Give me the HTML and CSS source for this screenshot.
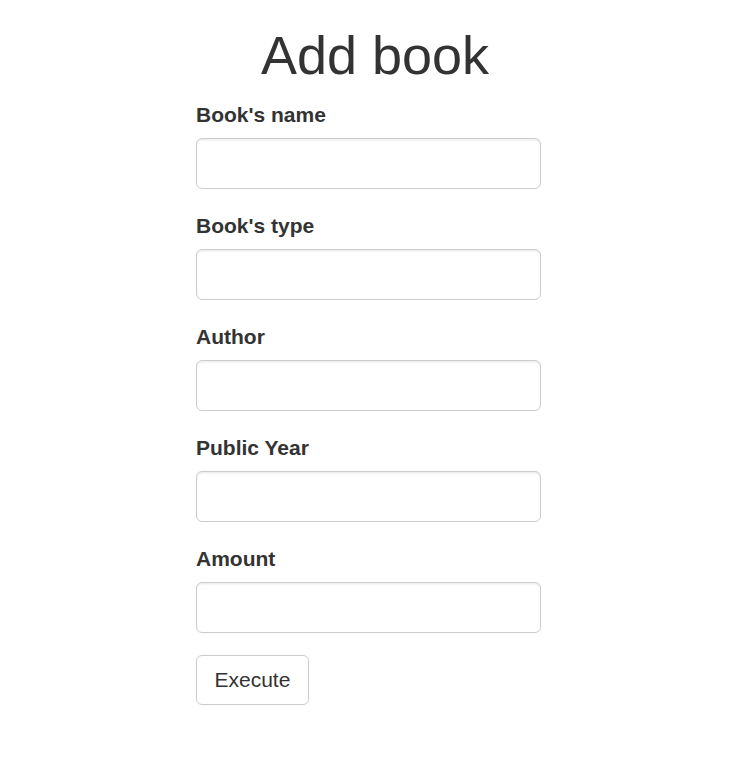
FILE: index.html
```
<!DOCTYPE html>
<html>
<head>
<meta charset="utf-8">
<link rel="stylesheet" href="styles.css">
</head>
<body>
<div class="page">
  <h1 class="title">Add book</h1>
  <form class="form">
    <div class="form-group">
      <label class="label">Book's name</label>
      <input class="input" type="text">
    </div>
    <div class="form-group">
      <label class="label">Book's type</label>
      <input class="input" type="text">
    </div>
    <div class="form-group">
      <label class="label">Author</label>
      <input class="input" type="text">
    </div>
    <div class="form-group">
      <label class="label">Public Year</label>
      <input class="input" type="text">
    </div>
    <div class="form-group">
      <label class="label">Amount</label>
      <input class="input" type="text">
    </div>
    <button class="btn" type="button">Execute</button>
  </form>
</div>
</body>
</html>
```
FILE: styles.css
```
html, body {
  margin: 0;
  padding: 0;
  background: #fff;
}
body {
  font-family: "Liberation Sans", Arial, sans-serif;
  color: #333;
  font-size: 21px;
  line-height: 30px;
}
.page {
  width: 750px;
}
.title {
  margin: 26px 0 15px;
  font-size: 54px;
  line-height: 59.4px;
  font-weight: 500;
  text-align: center;
}
.form {
  margin: 0 0 0 196px;
  width: 345px;
}
.form-group {
  margin-bottom: 22.5px;
}
.label {
  display: block;
  font-weight: bold;
  margin-bottom: 7.5px;
}
.input {
  display: block;
  box-sizing: border-box;
  width: 345px;
  height: 51px;
  padding: 9px 18px;
  font: inherit;
  color: #555;
  background: #fff;
  border: 1.5px solid #ccc;
  border-radius: 6px;
  box-shadow: inset 0 1.5px 1.5px rgba(0,0,0,0.075);
  outline: none;
}
.btn {
  display: inline-block;
  box-sizing: border-box;
  height: 50px;
  padding: 9px 17.5px;
  font-family: inherit;
  font-size: 21px;
  line-height: 30px;
  color: #333;
  background: #fff;
  border: 1.5px solid #ccc;
  border-radius: 6px;
}
```
